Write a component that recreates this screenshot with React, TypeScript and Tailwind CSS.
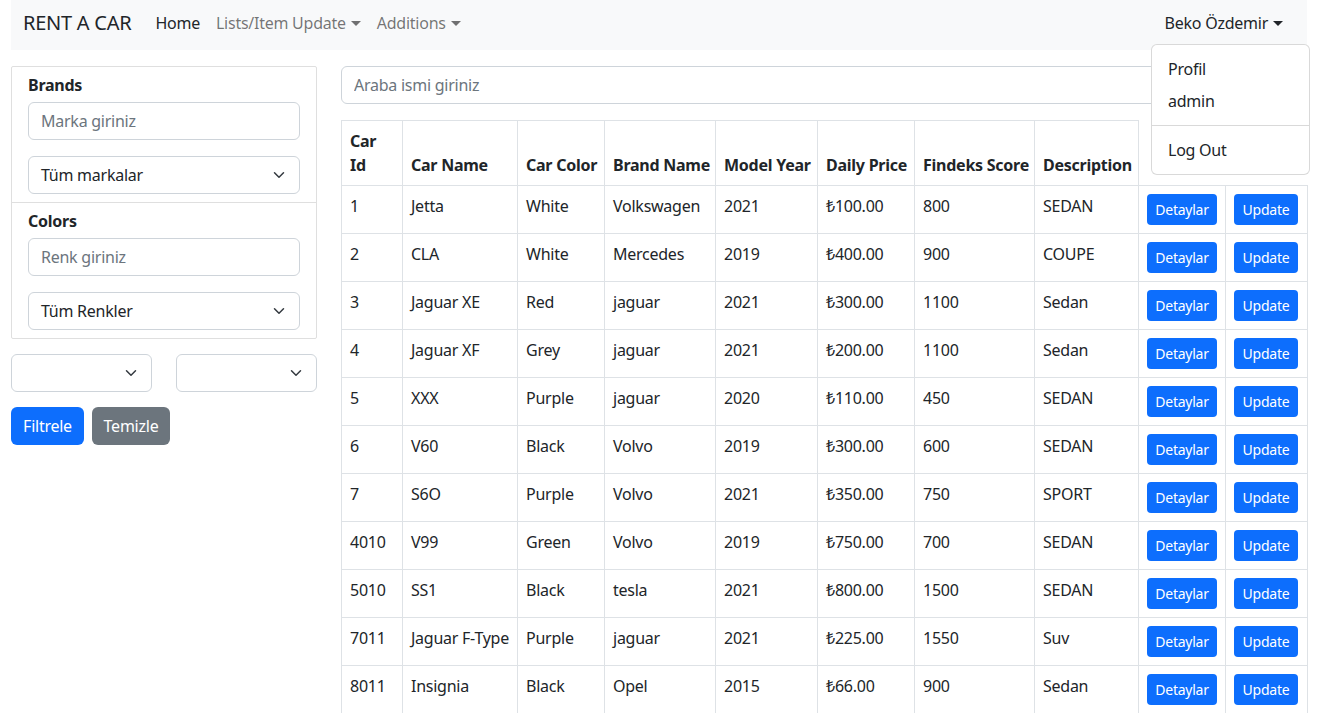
import React from 'react';

type Car = [string, string, string, string, string, string, string, string];

const cars: Car[] = [
 ['1', 'Jetta', 'White', 'Volkswagen', '2021', '₺100.00', '800', 'SEDAN'],
 ['2', 'CLA', 'White', 'Mercedes', '2019', '₺400.00', '900', 'COUPE'],
 ['3', 'Jaguar XE', 'Red', 'jaguar', '2021', '₺300.00', '1100', 'Sedan'],
 ['4', 'Jaguar XF', 'Grey', 'jaguar', '2021', '₺200.00', '1100', 'Sedan'],
 ['5', 'XXX', 'Purple', 'jaguar', '2020', '₺110.00', '450', 'SEDAN'],
 ['6', 'V60', 'Black', 'Volvo', '2019', '₺300.00', '600', 'SEDAN'],
 ['7', 'S6O', 'Purple', 'Volvo', '2021', '₺350.00', '750', 'SPORT'],
 ['4010', 'V99', 'Green', 'Volvo', '2019', '₺750.00', '700', 'SEDAN'],
 ['5010', 'SS1', 'Black', 'tesla', '2021', '₺800.00', '1500', 'SEDAN'],
 ['7011', 'Jaguar F-Type', 'Purple', 'jaguar', '2021', '₺225.00', '1550', 'Suv'],
 ['8011', 'Insignia', 'Black', 'Opel', '2015', '₺66.00', '900', 'Sedan'],
];

const Caret = () => (
 <svg width="10" height="5" viewBox="0 0 10 5" className="ml-[5px] inline-block">
  <path d="M0 0h10L5 5z" fill="currentColor" />
 </svg>
);

// bootstrap's select arrow, 16x12 box
const Chevron = () => (
 <svg width="16" height="12" viewBox="0 0 16 16" fill="none">
  <path d="m2 5 6 6 6-6" stroke="#343a40" strokeWidth="2" strokeLinecap="round" strokeLinejoin="round" />
 </svg>
);

// fake select, bootstrap form-select look
const Select = ({ label, className = '' }: { label?: string; className?: string }) => (
 <div className={`h-[38px] flex items-center justify-between pl-3 pr-3 border border-[#ced4da] rounded-md bg-white ${className}`}>
  <span>{label}</span>
  <Chevron />
 </div>
);

const Input = ({ placeholder, className = '' }: { placeholder: string; className?: string }) => (
 <input
  placeholder={placeholder}
  className={`h-[38px] px-3 border border-[#ced4da] rounded-md outline-none placeholder:text-[#6c757d] ${className}`}
 />
);

const headers = ['Car Name', 'Car Color', 'Brand Name', 'Model Year', 'Daily Price', 'Findeks Score', 'Description'];
const colWidths = [61, 115, 87, 111, 102, 97, 120, 104, 87, 82];

export default function App() {
 return (
  <div className="font-['Noto_Sans',sans-serif] text-[#212529] text-base leading-6 tracking-[-0.25px] bg-white min-h-[713px]">
   {/* navbar */}
   <nav className="relative ml-[11px] w-[1296px] h-[50px] pb-1 px-3 flex items-center bg-[#f8f9fa]">
    <span className="text-[20px] leading-[30px] mr-4">RENT A CAR</span>
    <span className="px-2">Home</span>
    <span className="px-2 text-black/55 flex items-center">Lists/Item Update<Caret /></span>
    <span className="px-2 text-black/55 flex items-center">Additions<Caret /></span>
    <span className="ml-auto pr-3 flex items-center">Beko Özdemir<Caret /></span>

    <div className="absolute left-[1140px] top-[44px] w-[159px] z-10 bg-white border border-black/15 rounded-md py-2">
     <div className="px-4 py-1">Profil</div>
     <div className="px-4 py-1">admin</div>
     <div className="my-2 border-t border-black/15" />
     <div className="px-4 py-1">Log Out</div>
    </div>
   </nav>

   <div className="ml-[11px] w-[1296px] mt-4 flex gap-6">
    {/* sidebar */}
    <div className="w-[306px] shrink-0">
     <div className="border border-black/[0.125] rounded-[2px]">
      <div className="px-4 pt-[6px] pb-2 flex flex-col">
       <span className="font-bold mb-[5px]">Brands</span>
       <Input placeholder="Marka giriniz" className="w-full mb-4" />
       <Select label="Tüm markalar" />
      </div>
      <div className="border-t border-black/[0.125] px-4 pt-[6px] pb-2 flex flex-col">
       <span className="font-bold mb-[5px]">Colors</span>
       <Input placeholder="Renk giriniz" className="w-full mb-4" />
       <Select label="Tüm Renkler" />
      </div>
     </div>
     <div className="mt-[15px] flex gap-6">
      <Select className="flex-1" />
      <Select className="flex-1" />
     </div>
     <div className="mt-[15px] flex gap-2">
      <button className="h-[38px] w-[73px] rounded-md bg-[#0d6efd] text-white">Filtrele</button>
      <button className="h-[38px] w-[78px] rounded-md bg-[#6c757d] text-white">Temizle</button>
     </div>
    </div>

    {/* main */}
    <div className="w-[966px]">
     <Input placeholder="Araba ismi giriniz" className="w-full block" />
     <table className="mt-4 w-[966px] table-fixed border-collapse">
      <colgroup>
       {colWidths.map((w, i) => (
        <col key={i} style={{ width: w }} />
       ))}
      </colgroup>
      <thead>
       <tr>
        <th className="border border-[#dee2e6] p-2 text-left align-bottom font-bold">
         Car
         <br />
         Id
        </th>
        {headers.map((h) => (
         <th key={h} className="border border-[#dee2e6] p-2 text-left align-bottom font-bold whitespace-nowrap">
          {h}
         </th>
        ))}
       </tr>
      </thead>
      <tbody>
       {cars.map((c) => (
        <tr key={c[0]}>
         {c.map((v, i) => (
          <td key={i} className="border border-[#dee2e6] p-2 align-top whitespace-nowrap">
           {v}
          </td>
         ))}
         <td className="border border-[#dee2e6] p-2 align-top">
          <button className="block w-[70px] h-[31px] rounded bg-[#0d6efd] text-white text-sm">Detaylar</button>
         </td>
         <td className="border border-[#dee2e6] p-2 align-top">
          <button className="block w-[64px] h-[31px] rounded bg-[#0d6efd] text-white text-sm">Update</button>
         </td>
        </tr>
       ))}
      </tbody>
     </table>
    </div>
   </div>
  </div>
 );
}
